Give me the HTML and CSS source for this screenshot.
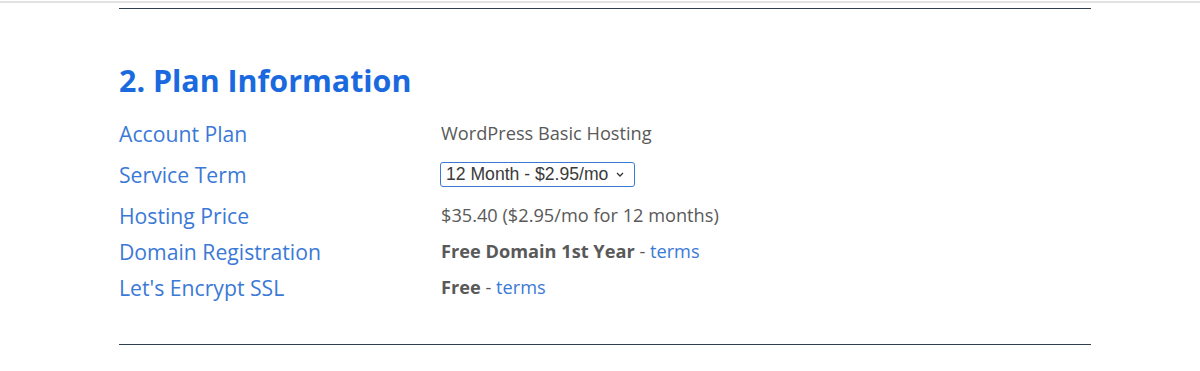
FILE: index.html
```html
<!DOCTYPE html>
<html lang="en">
<head>
  <meta charset="UTF-8">
  <meta name="viewport" content="width=device-width, initial-scale=1.0">
  <title>Plan Information</title>
  <link rel="stylesheet" href="styles.css">
</head>
<body>
  <div class="topbar"></div>
  <div class="container">
    <hr class="rule">

    <h2 class="section-title">2. Plan Information</h2>

    <div class="info">
      <div class="row">
        <div class="label">Account Plan</div>
        <div class="value">WordPress Basic Hosting</div>
      </div>
      <div class="row row-select">
        <div class="label">Service Term</div>
        <div class="value">
          <select class="term">
            <option>12 Month - $2.95/mo</option>
            <option>24 Month - $2.95/mo</option>
            <option>36 Month - $2.95/mo</option>
          </select>
        </div>
      </div>
      <div class="row">
        <div class="label">Hosting Price</div>
        <div class="value">$35.40 ($2.95/mo for 12 months)</div>
      </div>
      <div class="row">
        <div class="label">Domain Registration</div>
        <div class="value"><strong>Free Domain 1st Year</strong> - <a href="#">terms</a></div>
      </div>
      <div class="row">
        <div class="label">Let's Encrypt SSL</div>
        <div class="value"><strong>Free</strong> - <a href="#">terms</a></div>
      </div>
    </div>

    <hr class="rule rule-bottom">
  </div>
</body>
</html>
```

FILE: styles.css
```css
body {
  margin: 0;
  padding-top: 1px;
  font-family: "Open Sans", Arial, sans-serif;
  background: #fff;
}
.topbar {
  height: 2px;
  background: #e2e2e2;
}
.container {
  width: 972px;
  margin-left: 119px;
}
.rule {
  border: none;
  border-top: 1px solid #2f3e4d;
  margin: 5px 0 0 0;
}
.rule-bottom {
  margin-top: 39px;
}
.section-title {
  font-size: 30.4px;
  font-weight: 700;
  color: #1a69de;
  margin: 52px 0 0 0;
  line-height: 40px;
}
.info {
  margin-top: 14px;
}
.row {
  display: flex;
  align-items: center;
  height: 36px;
}
.row-select {
  height: 46px;
}
.label {
  width: 322px;
  font-size: 21.2px;
  color: #3b79d7;
}
.value {
  font-size: 18.2px;
  color: #595959;
}
.value strong {
  font-weight: 700;
}
.value a {
  color: #3b79d7;
  text-decoration: none;
}
.term {
  appearance: none;
  -webkit-appearance: none;
  font-family: "Liberation Sans", Arial, sans-serif;
  font-size: 17.6px;
  color: #3a3a3a;
  height: 25px;
  width: 195px;
  padding: 0 22px 0 5px;
  border: 1px solid #3b79d7;
  border-radius: 3px;
  background: #fff url("data:image/svg+xml;utf8,<svg xmlns='http://www.w3.org/2000/svg' width='8' height='5' viewBox='0 0 8 5'><path d='M1 1l3 3 3-3' fill='none' stroke='%23333' stroke-width='1.3'/></svg>") no-repeat right 10px center;
  margin-left: -1px;
}
```
